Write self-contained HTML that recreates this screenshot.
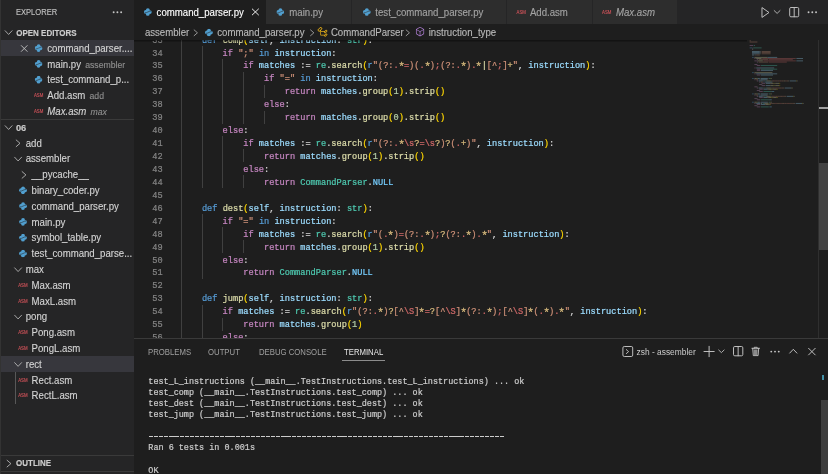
<!DOCTYPE html><html><head><meta charset="utf-8"><style>

*{margin:0;padding:0;box-sizing:border-box}
html,body{width:828px;height:474px;overflow:hidden;background:#1e1e1e}
body{position:relative;font-family:"Liberation Sans",sans-serif}
#wrap{position:absolute;left:0;top:0;width:828px;height:474px;will-change:transform}
.abs{position:absolute}
.sbh{position:absolute;font-size:8.2px;color:#c0c0c0;line-height:10px;white-space:nowrap;transform:scaleX(0.922);transform-origin:0 0;-webkit-text-stroke:0.12px currentColor}
.sech{position:absolute;font-size:8px;font-weight:bold;color:#cccccc;line-height:10px;white-space:nowrap;transform:scaleY(1.18);transform-origin:0 8.1px;-webkit-text-stroke:0.15px currentColor}
.row{position:absolute;font-size:9.65px;color:#d4d4d4;line-height:15.8px;white-space:nowrap;transform:scaleY(1.1);transform-origin:0 11.2px;-webkit-text-stroke:0.12px currentColor}
.row.it{font-style:italic}
.desc{font-size:8.7px;color:#8f8f8f;margin-left:4.2px}
.desc.it{font-style:italic}
.tabt{position:absolute;font-size:9.65px;color:#a3a3a3;line-height:24.4px;white-space:nowrap;transform:scaleY(1.1);transform-origin:0 15.5px;-webkit-text-stroke:0.12px currentColor}
.tabt.act{color:#ffffff}
.bct{position:absolute;font-size:9.65px;color:#bababa;line-height:15.2px;white-space:nowrap;transform:scaleY(1.1);transform-origin:0 10.9px;-webkit-text-stroke:0.12px currentColor}
#ed{position:absolute;left:0;top:0;width:828px;height:339px;overflow:hidden}
.ln{position:absolute;left:134px;width:28.6px;text-align:right;font-family:"Liberation Mono",monospace;font-size:8.63px;line-height:12.94px;color:#858585;-webkit-text-stroke:0.2px currentColor;transform:scaleY(1.12);transform-origin:0 9.2px}
.cl{position:absolute;left:181.2px;white-space:pre;font-family:"Liberation Mono",monospace;font-size:8.63px;line-height:12.94px;color:#d4d4d4;-webkit-text-stroke:0.22px currentColor}
.kw{color:#c586c0}.st{color:#569cd6}.fn{color:#dcdcaa}.var{color:#9cdcfe}.ty{color:#4ec9b0}.const{color:#75cdfe}
.ast{display:inline-block;transform:translateY(1.9px) scale(1.3)}
.s{color:#ce9178}.num{color:#b5cea8}.b1{color:#ffd700}.rx{color:#d16969}.rq{color:#d7ba7d}.rp{color:#ce9178}
.pt{position:absolute;font-size:8.5px;color:#a0a0a0;line-height:10px;white-space:nowrap;transform:scaleX(0.912);transform-origin:0 0}
.pt.act{color:#e7e7e7}
.term{position:absolute;white-space:pre;font-family:"Liberation Mono",monospace;font-size:8.48px;line-height:11.05px;color:#cccccc;-webkit-text-stroke:0.2px currentColor;transform:scaleY(1.12);transform-origin:0 7.8px}
#ov{position:absolute;left:0;top:0;width:828px;height:474px;overflow:visible}

</style></head><body><div id="wrap">
<div id="ed">
<div class="ln" style="top:34.56px">33</div>
<div class="cl" style="top:34.56px">    <span class="st">def</span> <span class="fn">comp</span><span class="b1">(</span><span class="var">self</span>, <span class="var">instruction</span>: <span class="ty">str</span><span class="b1">)</span>:</div>
<div class="ln" style="top:47.50px">34</div>
<div class="cl" style="top:47.50px">        <span class="kw">if</span> <span class="s">&quot;;&quot;</span> <span class="st">in</span> <span class="var">instruction</span>:</div>
<div class="ln" style="top:60.44px">35</div>
<div class="cl" style="top:60.44px">            <span class="kw">if</span> <span class="var">matches</span> := <span class="ty">re</span>.<span class="fn">search</span><span class="b1">(</span><span class="st">r</span><span class="s">&quot;</span><span class="rp">(?:</span><span class="rx">.</span><span class="rq ast">*</span><span class="rx">=</span><span class="rp">)</span><span class="rp">(</span><span class="rx">.</span><span class="rq ast">*</span><span class="rp">)</span><span class="rx">;</span><span class="rp">(?:</span><span class="rx">.</span><span class="rq ast">*</span><span class="rp">)</span><span class="rx">.</span><span class="rq ast">*</span><span class="fn">|</span><span class="rp">[</span><span class="rp">^</span><span class="rx">;</span><span class="rp">]</span><span class="rq">+</span><span class="s">&quot;</span>, <span class="var">instruction</span><span class="b1">)</span>:</div>
<div class="ln" style="top:73.38px">36</div>
<div class="cl" style="top:73.38px">                <span class="kw">if</span> <span class="s">&quot;=&quot;</span> <span class="st">in</span> <span class="var">instruction</span>:</div>
<div class="ln" style="top:86.32px">37</div>
<div class="cl" style="top:86.32px">                    <span class="kw">return</span> <span class="var">matches</span>.<span class="fn">group</span><span class="b1">(</span><span class="num">1</span><span class="b1">)</span>.<span class="fn">strip</span><span class="b1">(</span><span class="b1">)</span></div>
<div class="ln" style="top:99.26px">38</div>
<div class="cl" style="top:99.26px">                <span class="kw">else</span>:</div>
<div class="ln" style="top:112.20px">39</div>
<div class="cl" style="top:112.20px">                    <span class="kw">return</span> <span class="var">matches</span>.<span class="fn">group</span><span class="b1">(</span><span class="num">0</span><span class="b1">)</span>.<span class="fn">strip</span><span class="b1">(</span><span class="b1">)</span></div>
<div class="ln" style="top:125.14px">40</div>
<div class="cl" style="top:125.14px">        <span class="kw">else</span>:</div>
<div class="ln" style="top:138.08px">41</div>
<div class="cl" style="top:138.08px">            <span class="kw">if</span> <span class="var">matches</span> := <span class="ty">re</span>.<span class="fn">search</span><span class="b1">(</span><span class="st">r</span><span class="s">&quot;</span><span class="rp">(?:</span><span class="rx">.</span><span class="rq ast">*</span><span class="rx">\s</span><span class="rq">?</span><span class="rx">=</span><span class="rx">\s</span><span class="rq">?</span><span class="rp">)</span><span class="rq">?</span><span class="rp">(</span><span class="rx">.</span><span class="rq">+</span><span class="rp">)</span><span class="s">&quot;</span>, <span class="var">instruction</span><span class="b1">)</span>:</div>
<div class="ln" style="top:151.02px">42</div>
<div class="cl" style="top:151.02px">                <span class="kw">return</span> <span class="var">matches</span>.<span class="fn">group</span><span class="b1">(</span><span class="num">1</span><span class="b1">)</span>.<span class="fn">strip</span><span class="b1">(</span><span class="b1">)</span></div>
<div class="ln" style="top:163.96px">43</div>
<div class="cl" style="top:163.96px">            <span class="kw">else</span>:</div>
<div class="ln" style="top:176.90px">44</div>
<div class="cl" style="top:176.90px">                <span class="kw">return</span> <span class="ty">CommandParser</span>.<span class="const">NULL</span></div>
<div class="ln" style="top:189.84px">45</div>
<div class="cl" style="top:189.84px"></div>
<div class="ln" style="top:202.78px">46</div>
<div class="cl" style="top:202.78px">    <span class="st">def</span> <span class="fn">dest</span><span class="b1">(</span><span class="var">self</span>, <span class="var">instruction</span>: <span class="ty">str</span><span class="b1">)</span>:</div>
<div class="ln" style="top:215.72px">47</div>
<div class="cl" style="top:215.72px">        <span class="kw">if</span> <span class="s">&quot;=&quot;</span> <span class="st">in</span> <span class="var">instruction</span>:</div>
<div class="ln" style="top:228.66px">48</div>
<div class="cl" style="top:228.66px">            <span class="kw">if</span> <span class="var">matches</span> := <span class="ty">re</span>.<span class="fn">search</span><span class="b1">(</span><span class="st">r</span><span class="s">&quot;</span><span class="rp">(</span><span class="rx">.</span><span class="rq ast">*</span><span class="rp">)</span><span class="rx">=</span><span class="rp">(?:</span><span class="rx">.</span><span class="rq ast">*</span><span class="rp">)</span><span class="rx">;</span><span class="rq">?</span><span class="rp">(?:</span><span class="rx">.</span><span class="rq ast">*</span><span class="rp">)</span><span class="rx">.</span><span class="rq ast">*</span><span class="s">&quot;</span>, <span class="var">instruction</span><span class="b1">)</span>:</div>
<div class="ln" style="top:241.60px">49</div>
<div class="cl" style="top:241.60px">                <span class="kw">return</span> <span class="var">matches</span>.<span class="fn">group</span><span class="b1">(</span><span class="num">1</span><span class="b1">)</span>.<span class="fn">strip</span><span class="b1">(</span><span class="b1">)</span></div>
<div class="ln" style="top:254.54px">50</div>
<div class="cl" style="top:254.54px">        <span class="kw">else</span>:</div>
<div class="ln" style="top:267.48px">51</div>
<div class="cl" style="top:267.48px">            <span class="kw">return</span> <span class="ty">CommandParser</span>.<span class="const">NULL</span></div>
<div class="ln" style="top:280.42px">52</div>
<div class="cl" style="top:280.42px"></div>
<div class="ln" style="top:293.36px">53</div>
<div class="cl" style="top:293.36px">    <span class="st">def</span> <span class="fn">jump</span><span class="b1">(</span><span class="var">self</span>, <span class="var">instruction</span>: <span class="ty">str</span><span class="b1">)</span>:</div>
<div class="ln" style="top:306.30px">54</div>
<div class="cl" style="top:306.30px">        <span class="kw">if</span> <span class="var">matches</span> := <span class="ty">re</span>.<span class="fn">search</span><span class="b1">(</span><span class="st">r</span><span class="s">&quot;</span><span class="rp">(?:</span><span class="rx">.</span><span class="rq ast">*</span><span class="rp">)</span><span class="rq">?</span><span class="rp">[</span><span class="rp">^</span><span class="rx">\S</span><span class="rp">]</span><span class="rq ast">*</span><span class="rx">=</span><span class="rq">?</span><span class="rp">[</span><span class="rp">^</span><span class="rx">\S</span><span class="rp">]</span><span class="rq ast">*</span><span class="rp">(?:</span><span class="rx">.</span><span class="rq ast">*</span><span class="rp">)</span><span class="rx">;</span><span class="rp">[</span><span class="rp">^</span><span class="rx">\S</span><span class="rp">]</span><span class="rq ast">*</span><span class="rp">(</span><span class="rx">.</span><span class="rq ast">*</span><span class="rp">)</span><span class="rx">.</span><span class="rq ast">*</span><span class="s">&quot;</span>, <span class="var">instruction</span><span class="b1">)</span>:</div>
<div class="ln" style="top:319.24px">55</div>
<div class="cl" style="top:319.24px">            <span class="kw">return</span> <span class="var">matches</span>.<span class="fn">group</span><span class="b1">(</span><span class="num">1</span><span class="b1">)</span></div>
<div class="ln" style="top:332.18px">56</div>
<div class="cl" style="top:332.18px">        <span class="kw">else</span>:</div>
<div class="abs" style="left:180.80px;top:32.96px;width:0.90px;height:310.56px;background:#404040;"></div>
<div class="abs" style="left:201.51px;top:45.90px;width:0.90px;height:142.34px;background:#404040;"></div>
<div class="abs" style="left:201.51px;top:214.12px;width:0.90px;height:64.70px;background:#404040;"></div>
<div class="abs" style="left:201.51px;top:304.70px;width:0.90px;height:38.82px;background:#404040;"></div>
<div class="abs" style="left:222.22px;top:58.84px;width:0.90px;height:64.70px;background:#404040;"></div>
<div class="abs" style="left:222.22px;top:136.48px;width:0.90px;height:51.76px;background:#404040;"></div>
<div class="abs" style="left:222.22px;top:227.06px;width:0.90px;height:25.88px;background:#404040;"></div>
<div class="abs" style="left:222.22px;top:317.64px;width:0.90px;height:12.94px;background:#404040;"></div>
<div class="abs" style="left:242.94px;top:71.78px;width:0.90px;height:51.76px;background:#404040;"></div>
<div class="abs" style="left:242.94px;top:149.42px;width:0.90px;height:12.94px;background:#404040;"></div>
<div class="abs" style="left:242.94px;top:175.30px;width:0.90px;height:12.94px;background:#404040;"></div>
<div class="abs" style="left:242.94px;top:240.00px;width:0.90px;height:12.94px;background:#404040;"></div>
<div class="abs" style="left:263.65px;top:84.72px;width:0.90px;height:12.94px;background:#404040;"></div>
<div class="abs" style="left:263.65px;top:110.60px;width:0.90px;height:12.94px;background:#404040;"></div>
</div>
<div class="abs" style="left:818.20px;top:40.00px;width:0.90px;height:299.00px;background:#2f2f2f;"></div>
<div class="abs" style="left:818.80px;top:163.00px;width:9.20px;height:87.00px;background:#434343;"></div>
<div class="abs" style="left:819.00px;top:107.20px;width:9.00px;height:1.70px;background:#a0a0a0;"></div>
<div id="panel">
<div class="abs" style="left:134.00px;top:338.60px;width:694.00px;height:136.00px;background:#1e1e1e;"></div>
<div class="abs" style="left:134.00px;top:338.20px;width:694.00px;height:0.90px;background:#3a3a3a;"></div>
<div class="pt" style="left:147.80px;top:346.90px;">PROBLEMS</div>
<div class="pt" style="left:208.40px;top:346.90px;">OUTPUT</div>
<div class="pt" style="left:258.70px;top:346.90px;">DEBUG CONSOLE</div>
<div class="pt act" style="left:344.10px;top:346.90px;">TERMINAL</div>
<div class="abs" style="left:341.90px;top:359.90px;width:43.50px;height:1.30px;background:#8c8c8c;"></div>
<div class="term" style="left:148.30px;top:377.20px;">test_L_instructions (__main__.TestInstructions.test_L_instructions) ... ok</div>
<div class="term" style="left:148.30px;top:388.24px;">test_comp (__main__.TestInstructions.test_comp) ... ok</div>
<div class="term" style="left:148.30px;top:399.28px;">test_dest (__main__.TestInstructions.test_dest) ... ok</div>
<div class="term" style="left:148.30px;top:410.32px;">test_jump (__main__.TestInstructions.test_jump) ... ok</div>
<div class="term" style="left:148.30px;top:421.36px;"></div>
<div class="term" style="left:148.30px;top:432.40px;"></div>
<div class="term" style="left:148.30px;top:443.44px;">Ran 6 tests in 0.001s</div>
<div class="term" style="left:148.30px;top:454.48px;"></div>
<div class="term" style="left:148.30px;top:465.52px;">OK</div>
<div class="abs" style="left:148.50px;top:436.00px;width:356.30px;height:1.05px;background:transparent;background:repeating-linear-gradient(90deg,#cccccc 0,#cccccc 4.2px,transparent 4.2px,transparent 5.09px)"></div>
<div class="pt" style="left:636.60px;top:346.70px;font-size:8.4px;color:#cccccc;transform:none">zsh - assembler</div>
<div class="abs" style="left:821.60px;top:374.60px;width:2.50px;height:5.00px;background:#4391a8;"></div>
<div class="abs" style="left:821.30px;top:400.00px;width:6.70px;height:74.00px;background:#3e3e3e;"></div>
</div>
<div class="abs" style="left:134.00px;top:0.00px;width:694.00px;height:24.40px;background:#252526;"></div>
<div class="abs" style="left:134.00px;top:0.00px;width:131.80px;height:24.40px;background:#1e1e1e;"></div>
<div class="tabt act" style="left:156.60px;top:0.50px;">command_parser.py</div>
<div class="abs" style="left:265.80px;top:0.00px;width:86.20px;height:24.40px;background:#2d2d2d;"></div>
<div class="abs" style="left:351.20px;top:0.00px;width:0.80px;height:24.40px;background:#252526;"></div>
<div class="tabt" style="left:289.30px;top:0.50px;">main.py</div>
<div class="abs" style="left:352.00px;top:0.00px;width:154.70px;height:24.40px;background:#2d2d2d;"></div>
<div class="abs" style="left:505.90px;top:0.00px;width:0.80px;height:24.40px;background:#252526;"></div>
<div class="tabt" style="left:375.30px;top:0.50px;">test_command_parser.py</div>
<div class="abs" style="left:506.70px;top:0.00px;width:86.00px;height:24.40px;background:#2d2d2d;"></div>
<div class="abs" style="left:591.90px;top:0.00px;width:0.80px;height:24.40px;background:#252526;"></div>
<div class="tabt" style="left:529.90px;top:0.50px;">Add.asm</div>
<div class="abs" style="left:592.70px;top:0.00px;width:85.30px;height:24.40px;background:#2d2d2d;"></div>
<div class="abs" style="left:677.20px;top:0.00px;width:0.80px;height:24.40px;background:#252526;"></div>
<div class="tabt" style="left:616.00px;top:0.50px;font-style:italic;">Max.asm</div>
<div class="abs" style="left:134.00px;top:24.40px;width:694.00px;height:15.60px;background:#1e1e1e;"></div>
<div class="abs" style="left:134.00px;top:40.00px;width:613.40px;height:2.20px;background:transparent;background:linear-gradient(rgba(0,0,0,0.42),rgba(0,0,0,0.12))"></div>
<div class="bct" style="left:144.90px;top:25.00px;">assembler</div>
<div class="bct" style="left:217.30px;top:25.00px;">command_parser.py</div>
<div class="bct" style="left:330.90px;top:25.00px;">CommandParser</div>
<div class="bct" style="left:428.70px;top:25.00px;">instruction_type</div>
<div class="abs" style="left:0.00px;top:0.00px;width:134.00px;height:474.00px;background:#252526;"></div>
<div class="sbh" style="left:15.70px;top:7.70px;">EXPLORER</div>
<div class="sech" style="left:16.20px;top:28.70px;">OPEN EDITORS</div>
<div class="abs" style="left:1.30px;top:40.20px;width:132.70px;height:15.70px;background:#37373d;"></div>
<div class="row" style="left:47.30px;top:40.80px;">command_parser....</div>
<div class="row" style="left:47.30px;top:56.60px;">main.py<span class="desc">assembler</span></div>
<div class="row" style="left:47.30px;top:72.40px;">test_command_p...</div>
<div class="row" style="left:47.30px;top:88.20px;">Add.asm<span class="desc">add</span></div>
<div class="row it" style="left:47.30px;top:104.00px;">Max.asm<span class="desc it">max</span></div>
<div class="abs" style="left:1.30px;top:118.70px;width:132.70px;height:1.00px;background:#3a3a3a;"></div>
<div class="sech" style="left:15.90px;top:123.10px;font-size:8.4px;transform:scaleY(1.1) scaleX(1.1)">06</div>
<div class="row" style="left:25.70px;top:135.60px;">add</div>
<div class="row" style="left:25.70px;top:151.40px;">assembler</div>
<div class="row" style="left:31.60px;top:167.20px;">__pycache__</div>
<div class="row" style="left:31.60px;top:183.00px;">binary_coder.py</div>
<div class="row" style="left:31.60px;top:198.80px;">command_parser.py</div>
<div class="row" style="left:31.60px;top:214.60px;">main.py</div>
<div class="row" style="left:31.60px;top:230.40px;">symbol_table.py</div>
<div class="row" style="left:31.60px;top:246.20px;">test_command_parse...</div>
<div class="row" style="left:25.70px;top:262.00px;">max</div>
<div class="row" style="left:31.60px;top:277.80px;">Max.asm</div>
<div class="row" style="left:31.60px;top:293.60px;">MaxL.asm</div>
<div class="row" style="left:25.70px;top:309.40px;">pong</div>
<div class="row" style="left:31.60px;top:325.20px;">Pong.asm</div>
<div class="row" style="left:31.60px;top:341.00px;">PongL.asm</div>
<div class="abs" style="left:1.30px;top:356.20px;width:132.70px;height:15.70px;background:#37373d;"></div>
<div class="row" style="left:25.70px;top:356.80px;">rect</div>
<div class="row" style="left:31.60px;top:372.60px;">Rect.asm</div>
<div class="row" style="left:31.60px;top:388.40px;">RectL.asm</div>
<div class="abs" style="left:15.40px;top:372.00px;width:1.00px;height:31.80px;background:#585858;"></div>
<div class="abs" style="left:1.30px;top:455.30px;width:132.70px;height:1.00px;background:#3a3a3a;"></div>
<div class="sech" style="left:16.00px;top:459.40px;">OUTLINE</div>
<div class="abs" style="left:1.30px;top:471.40px;width:132.70px;height:1.00px;background:#3a3a3a;"></div>
<div class="abs" style="left:0.00px;top:0.00px;width:1.30px;height:474.00px;background:#333333;"></div>
<svg id="ov" viewBox="0 0 828 474"><defs><mask id="pym" maskUnits="userSpaceOnUse" x="0" y="0" width="16" height="16"><rect width="16" height="16" fill="#fff"/><path d="M2.2 9.6C4.5 9.6 6 9 8 8C10 7 11.5 6.4 13.8 6.4" fill="none" stroke="#000" stroke-width="1.1"/></mask></defs><g opacity="0.38"><rect x="749.60" y="40.40" width="1.20" height="0.85" fill="#ce9178"/><rect x="749.60" y="41.58" width="7.80" height="0.85" fill="#ce9178"/><rect x="749.60" y="45.12" width="3.60" height="0.85" fill="#c586c0"/><rect x="753.80" y="45.12" width="1.20" height="0.85" fill="#4ec9b0"/><rect x="749.60" y="47.48" width="3.00" height="0.85" fill="#569cd6"/><rect x="753.20" y="47.48" width="8.40" height="0.85" fill="#4ec9b0"/><rect x="752.00" y="48.66" width="1.20" height="0.85" fill="#d4d4d4"/><rect x="752.00" y="51.02" width="7.80" height="0.85" fill="#9cdcfe"/><rect x="760.40" y="51.02" width="0.60" height="0.85" fill="#d4d4d4"/><rect x="761.60" y="51.02" width="9.00" height="0.85" fill="#ce9178"/><rect x="752.00" y="52.20" width="7.80" height="0.85" fill="#9cdcfe"/><rect x="760.40" y="52.20" width="0.60" height="0.85" fill="#d4d4d4"/><rect x="761.60" y="52.20" width="9.00" height="0.85" fill="#ce9178"/><rect x="752.00" y="53.38" width="7.80" height="0.85" fill="#9cdcfe"/><rect x="760.40" y="53.38" width="0.60" height="0.85" fill="#d4d4d4"/><rect x="761.60" y="53.38" width="9.00" height="0.85" fill="#ce9178"/><rect x="752.00" y="54.56" width="2.40" height="0.85" fill="#9cdcfe"/><rect x="755.00" y="54.56" width="0.60" height="0.85" fill="#d4d4d4"/><rect x="756.20" y="54.56" width="3.60" height="0.85" fill="#ce9178"/><rect x="752.00" y="56.92" width="1.80" height="0.85" fill="#569cd6"/><rect x="754.40" y="56.92" width="13.20" height="0.85" fill="#dcdcaa"/><rect x="767.60" y="56.92" width="9.60" height="0.85" fill="#9cdcfe"/><rect x="754.40" y="58.10" width="1.20" height="0.85" fill="#c586c0"/><rect x="756.20" y="58.10" width="5.40" height="0.85" fill="#dcdcaa"/><rect x="762.20" y="58.10" width="33.60" height="0.85" fill="#d16969"/><rect x="796.40" y="58.10" width="6.60" height="0.85" fill="#9cdcfe"/><rect x="756.80" y="59.28" width="1.20" height="0.85" fill="#c586c0"/><rect x="758.60" y="59.28" width="9.60" height="0.85" fill="#ce9178"/><rect x="768.80" y="59.28" width="24.00" height="0.85" fill="#d16969"/><rect x="754.40" y="60.46" width="2.40" height="0.85" fill="#c586c0"/><rect x="757.40" y="60.46" width="5.40" height="0.85" fill="#dcdcaa"/><rect x="763.40" y="60.46" width="32.40" height="0.85" fill="#d16969"/><rect x="796.40" y="60.46" width="6.60" height="0.85" fill="#9cdcfe"/><rect x="756.80" y="61.64" width="1.20" height="0.85" fill="#c586c0"/><rect x="758.60" y="61.64" width="9.60" height="0.85" fill="#ce9178"/><rect x="768.80" y="61.64" width="18.00" height="0.85" fill="#d16969"/><rect x="754.40" y="64.00" width="3.00" height="0.85" fill="#c586c0"/><rect x="756.80" y="65.18" width="3.60" height="0.85" fill="#c586c0"/><rect x="761.00" y="65.18" width="16.20" height="0.85" fill="#4ec9b0"/><rect x="754.40" y="67.54" width="1.20" height="0.85" fill="#c586c0"/><rect x="756.20" y="67.54" width="18.00" height="0.85" fill="#9cdcfe"/><rect x="756.80" y="68.72" width="3.60" height="0.85" fill="#c586c0"/><rect x="761.00" y="68.72" width="16.20" height="0.85" fill="#4ec9b0"/><rect x="756.80" y="69.90" width="3.60" height="0.85" fill="#c586c0"/><rect x="761.00" y="69.90" width="12.00" height="0.85" fill="#9cdcfe"/><rect x="752.00" y="72.26" width="1.80" height="0.85" fill="#569cd6"/><rect x="754.40" y="72.26" width="18.00" height="0.85" fill="#dcdcaa"/><rect x="754.40" y="73.44" width="1.20" height="0.85" fill="#c586c0"/><rect x="756.20" y="73.44" width="21.00" height="0.85" fill="#9cdcfe"/><rect x="756.80" y="74.62" width="3.60" height="0.85" fill="#c586c0"/><rect x="761.00" y="74.62" width="12.00" height="0.85" fill="#9cdcfe"/><rect x="752.00" y="78.16" width="1.80" height="0.85" fill="#569cd6"/><rect x="754.40" y="78.16" width="2.40" height="0.85" fill="#dcdcaa"/><rect x="756.80" y="78.16" width="0.60" height="0.85" fill="#ffd700"/><rect x="757.40" y="78.16" width="2.40" height="0.85" fill="#9cdcfe"/><rect x="759.80" y="78.16" width="0.60" height="0.85" fill="#d4d4d4"/><rect x="761.00" y="78.16" width="6.60" height="0.85" fill="#9cdcfe"/><rect x="767.60" y="78.16" width="0.60" height="0.85" fill="#d4d4d4"/><rect x="768.80" y="78.16" width="1.80" height="0.85" fill="#4ec9b0"/><rect x="770.60" y="78.16" width="0.60" height="0.85" fill="#ffd700"/><rect x="771.20" y="78.16" width="0.60" height="0.85" fill="#d4d4d4"/><rect x="754.40" y="79.34" width="1.20" height="0.85" fill="#c586c0"/><rect x="756.20" y="79.34" width="1.80" height="0.85" fill="#ce9178"/><rect x="758.60" y="79.34" width="1.20" height="0.85" fill="#569cd6"/><rect x="760.40" y="79.34" width="6.60" height="0.85" fill="#9cdcfe"/><rect x="767.00" y="79.34" width="0.60" height="0.85" fill="#d4d4d4"/><rect x="756.80" y="80.52" width="1.20" height="0.85" fill="#c586c0"/><rect x="758.60" y="80.52" width="4.20" height="0.85" fill="#9cdcfe"/><rect x="763.40" y="80.52" width="1.20" height="0.85" fill="#d4d4d4"/><rect x="765.20" y="80.52" width="1.20" height="0.85" fill="#4ec9b0"/><rect x="766.40" y="80.52" width="0.60" height="0.85" fill="#d4d4d4"/><rect x="767.00" y="80.52" width="3.60" height="0.85" fill="#dcdcaa"/><rect x="770.60" y="80.52" width="0.60" height="0.85" fill="#ffd700"/><rect x="771.20" y="80.52" width="0.60" height="0.85" fill="#569cd6"/><rect x="771.80" y="80.52" width="0.60" height="0.85" fill="#ce9178"/><rect x="772.40" y="80.52" width="1.80" height="0.85" fill="#ce9178"/><rect x="774.20" y="80.52" width="0.60" height="0.85" fill="#d16969"/><rect x="774.80" y="80.52" width="0.60" height="0.85" fill="#d7ba7d"/><rect x="775.40" y="80.52" width="0.60" height="0.85" fill="#d16969"/><rect x="776.00" y="80.52" width="0.60" height="0.85" fill="#ce9178"/><rect x="776.60" y="80.52" width="0.60" height="0.85" fill="#ce9178"/><rect x="777.20" y="80.52" width="0.60" height="0.85" fill="#d16969"/><rect x="777.80" y="80.52" width="0.60" height="0.85" fill="#d7ba7d"/><rect x="778.40" y="80.52" width="0.60" height="0.85" fill="#ce9178"/><rect x="779.00" y="80.52" width="0.60" height="0.85" fill="#d16969"/><rect x="779.60" y="80.52" width="1.80" height="0.85" fill="#ce9178"/><rect x="781.40" y="80.52" width="0.60" height="0.85" fill="#d16969"/><rect x="782.00" y="80.52" width="0.60" height="0.85" fill="#d7ba7d"/><rect x="782.60" y="80.52" width="0.60" height="0.85" fill="#ce9178"/><rect x="783.20" y="80.52" width="0.60" height="0.85" fill="#d16969"/><rect x="783.80" y="80.52" width="0.60" height="0.85" fill="#d7ba7d"/><rect x="784.40" y="80.52" width="0.60" height="0.85" fill="#dcdcaa"/><rect x="785.00" y="80.52" width="0.60" height="0.85" fill="#ce9178"/><rect x="785.60" y="80.52" width="0.60" height="0.85" fill="#ce9178"/><rect x="786.20" y="80.52" width="0.60" height="0.85" fill="#d16969"/><rect x="786.80" y="80.52" width="0.60" height="0.85" fill="#ce9178"/><rect x="787.40" y="80.52" width="0.60" height="0.85" fill="#d7ba7d"/><rect x="788.00" y="80.52" width="0.60" height="0.85" fill="#ce9178"/><rect x="788.60" y="80.52" width="0.60" height="0.85" fill="#d4d4d4"/><rect x="789.80" y="80.52" width="6.60" height="0.85" fill="#9cdcfe"/><rect x="796.40" y="80.52" width="0.60" height="0.85" fill="#ffd700"/><rect x="797.00" y="80.52" width="0.60" height="0.85" fill="#d4d4d4"/><rect x="759.20" y="81.70" width="1.20" height="0.85" fill="#c586c0"/><rect x="761.00" y="81.70" width="1.80" height="0.85" fill="#ce9178"/><rect x="763.40" y="81.70" width="1.20" height="0.85" fill="#569cd6"/><rect x="765.20" y="81.70" width="6.60" height="0.85" fill="#9cdcfe"/><rect x="771.80" y="81.70" width="0.60" height="0.85" fill="#d4d4d4"/><rect x="761.60" y="82.88" width="3.60" height="0.85" fill="#c586c0"/><rect x="765.80" y="82.88" width="4.20" height="0.85" fill="#9cdcfe"/><rect x="770.00" y="82.88" width="0.60" height="0.85" fill="#d4d4d4"/><rect x="770.60" y="82.88" width="3.00" height="0.85" fill="#dcdcaa"/><rect x="773.60" y="82.88" width="0.60" height="0.85" fill="#ffd700"/><rect x="774.20" y="82.88" width="0.60" height="0.85" fill="#b5cea8"/><rect x="774.80" y="82.88" width="0.60" height="0.85" fill="#ffd700"/><rect x="775.40" y="82.88" width="0.60" height="0.85" fill="#d4d4d4"/><rect x="776.00" y="82.88" width="3.00" height="0.85" fill="#dcdcaa"/><rect x="779.00" y="82.88" width="0.60" height="0.85" fill="#ffd700"/><rect x="779.60" y="82.88" width="0.60" height="0.85" fill="#ffd700"/><rect x="759.20" y="84.06" width="2.40" height="0.85" fill="#c586c0"/><rect x="761.60" y="84.06" width="0.60" height="0.85" fill="#d4d4d4"/><rect x="761.60" y="85.24" width="3.60" height="0.85" fill="#c586c0"/><rect x="765.80" y="85.24" width="4.20" height="0.85" fill="#9cdcfe"/><rect x="770.00" y="85.24" width="0.60" height="0.85" fill="#d4d4d4"/><rect x="770.60" y="85.24" width="3.00" height="0.85" fill="#dcdcaa"/><rect x="773.60" y="85.24" width="0.60" height="0.85" fill="#ffd700"/><rect x="774.20" y="85.24" width="0.60" height="0.85" fill="#b5cea8"/><rect x="774.80" y="85.24" width="0.60" height="0.85" fill="#ffd700"/><rect x="775.40" y="85.24" width="0.60" height="0.85" fill="#d4d4d4"/><rect x="776.00" y="85.24" width="3.00" height="0.85" fill="#dcdcaa"/><rect x="779.00" y="85.24" width="0.60" height="0.85" fill="#ffd700"/><rect x="779.60" y="85.24" width="0.60" height="0.85" fill="#ffd700"/><rect x="754.40" y="86.42" width="2.40" height="0.85" fill="#c586c0"/><rect x="756.80" y="86.42" width="0.60" height="0.85" fill="#d4d4d4"/><rect x="756.80" y="87.60" width="1.20" height="0.85" fill="#c586c0"/><rect x="758.60" y="87.60" width="4.20" height="0.85" fill="#9cdcfe"/><rect x="763.40" y="87.60" width="1.20" height="0.85" fill="#d4d4d4"/><rect x="765.20" y="87.60" width="1.20" height="0.85" fill="#4ec9b0"/><rect x="766.40" y="87.60" width="0.60" height="0.85" fill="#d4d4d4"/><rect x="767.00" y="87.60" width="3.60" height="0.85" fill="#dcdcaa"/><rect x="770.60" y="87.60" width="0.60" height="0.85" fill="#ffd700"/><rect x="771.20" y="87.60" width="0.60" height="0.85" fill="#569cd6"/><rect x="771.80" y="87.60" width="0.60" height="0.85" fill="#ce9178"/><rect x="772.40" y="87.60" width="1.80" height="0.85" fill="#ce9178"/><rect x="774.20" y="87.60" width="0.60" height="0.85" fill="#d16969"/><rect x="774.80" y="87.60" width="0.60" height="0.85" fill="#d7ba7d"/><rect x="775.40" y="87.60" width="1.20" height="0.85" fill="#d16969"/><rect x="776.60" y="87.60" width="0.60" height="0.85" fill="#d7ba7d"/><rect x="777.20" y="87.60" width="0.60" height="0.85" fill="#d16969"/><rect x="777.80" y="87.60" width="1.20" height="0.85" fill="#d16969"/><rect x="779.00" y="87.60" width="0.60" height="0.85" fill="#d7ba7d"/><rect x="779.60" y="87.60" width="0.60" height="0.85" fill="#ce9178"/><rect x="780.20" y="87.60" width="0.60" height="0.85" fill="#d7ba7d"/><rect x="780.80" y="87.60" width="0.60" height="0.85" fill="#ce9178"/><rect x="781.40" y="87.60" width="0.60" height="0.85" fill="#d16969"/><rect x="782.00" y="87.60" width="0.60" height="0.85" fill="#d7ba7d"/><rect x="782.60" y="87.60" width="0.60" height="0.85" fill="#ce9178"/><rect x="783.20" y="87.60" width="0.60" height="0.85" fill="#ce9178"/><rect x="783.80" y="87.60" width="0.60" height="0.85" fill="#d4d4d4"/><rect x="785.00" y="87.60" width="6.60" height="0.85" fill="#9cdcfe"/><rect x="791.60" y="87.60" width="0.60" height="0.85" fill="#ffd700"/><rect x="792.20" y="87.60" width="0.60" height="0.85" fill="#d4d4d4"/><rect x="759.20" y="88.78" width="3.60" height="0.85" fill="#c586c0"/><rect x="763.40" y="88.78" width="4.20" height="0.85" fill="#9cdcfe"/><rect x="767.60" y="88.78" width="0.60" height="0.85" fill="#d4d4d4"/><rect x="768.20" y="88.78" width="3.00" height="0.85" fill="#dcdcaa"/><rect x="771.20" y="88.78" width="0.60" height="0.85" fill="#ffd700"/><rect x="771.80" y="88.78" width="0.60" height="0.85" fill="#b5cea8"/><rect x="772.40" y="88.78" width="0.60" height="0.85" fill="#ffd700"/><rect x="773.00" y="88.78" width="0.60" height="0.85" fill="#d4d4d4"/><rect x="773.60" y="88.78" width="3.00" height="0.85" fill="#dcdcaa"/><rect x="776.60" y="88.78" width="0.60" height="0.85" fill="#ffd700"/><rect x="777.20" y="88.78" width="0.60" height="0.85" fill="#ffd700"/><rect x="756.80" y="89.96" width="2.40" height="0.85" fill="#c586c0"/><rect x="759.20" y="89.96" width="0.60" height="0.85" fill="#d4d4d4"/><rect x="759.20" y="91.14" width="3.60" height="0.85" fill="#c586c0"/><rect x="763.40" y="91.14" width="7.80" height="0.85" fill="#4ec9b0"/><rect x="771.20" y="91.14" width="0.60" height="0.85" fill="#d4d4d4"/><rect x="771.80" y="91.14" width="2.40" height="0.85" fill="#75cdfe"/><rect x="752.00" y="93.50" width="1.80" height="0.85" fill="#569cd6"/><rect x="754.40" y="93.50" width="2.40" height="0.85" fill="#dcdcaa"/><rect x="756.80" y="93.50" width="0.60" height="0.85" fill="#ffd700"/><rect x="757.40" y="93.50" width="2.40" height="0.85" fill="#9cdcfe"/><rect x="759.80" y="93.50" width="0.60" height="0.85" fill="#d4d4d4"/><rect x="761.00" y="93.50" width="6.60" height="0.85" fill="#9cdcfe"/><rect x="767.60" y="93.50" width="0.60" height="0.85" fill="#d4d4d4"/><rect x="768.80" y="93.50" width="1.80" height="0.85" fill="#4ec9b0"/><rect x="770.60" y="93.50" width="0.60" height="0.85" fill="#ffd700"/><rect x="771.20" y="93.50" width="0.60" height="0.85" fill="#d4d4d4"/><rect x="754.40" y="94.68" width="1.20" height="0.85" fill="#c586c0"/><rect x="756.20" y="94.68" width="1.80" height="0.85" fill="#ce9178"/><rect x="758.60" y="94.68" width="1.20" height="0.85" fill="#569cd6"/><rect x="760.40" y="94.68" width="6.60" height="0.85" fill="#9cdcfe"/><rect x="767.00" y="94.68" width="0.60" height="0.85" fill="#d4d4d4"/><rect x="756.80" y="95.86" width="1.20" height="0.85" fill="#c586c0"/><rect x="758.60" y="95.86" width="4.20" height="0.85" fill="#9cdcfe"/><rect x="763.40" y="95.86" width="1.20" height="0.85" fill="#d4d4d4"/><rect x="765.20" y="95.86" width="1.20" height="0.85" fill="#4ec9b0"/><rect x="766.40" y="95.86" width="0.60" height="0.85" fill="#d4d4d4"/><rect x="767.00" y="95.86" width="3.60" height="0.85" fill="#dcdcaa"/><rect x="770.60" y="95.86" width="0.60" height="0.85" fill="#ffd700"/><rect x="771.20" y="95.86" width="0.60" height="0.85" fill="#569cd6"/><rect x="771.80" y="95.86" width="0.60" height="0.85" fill="#ce9178"/><rect x="772.40" y="95.86" width="0.60" height="0.85" fill="#ce9178"/><rect x="773.00" y="95.86" width="0.60" height="0.85" fill="#d16969"/><rect x="773.60" y="95.86" width="0.60" height="0.85" fill="#d7ba7d"/><rect x="774.20" y="95.86" width="0.60" height="0.85" fill="#ce9178"/><rect x="774.80" y="95.86" width="0.60" height="0.85" fill="#d16969"/><rect x="775.40" y="95.86" width="1.80" height="0.85" fill="#ce9178"/><rect x="777.20" y="95.86" width="0.60" height="0.85" fill="#d16969"/><rect x="777.80" y="95.86" width="0.60" height="0.85" fill="#d7ba7d"/><rect x="778.40" y="95.86" width="0.60" height="0.85" fill="#ce9178"/><rect x="779.00" y="95.86" width="0.60" height="0.85" fill="#d16969"/><rect x="779.60" y="95.86" width="0.60" height="0.85" fill="#d7ba7d"/><rect x="780.20" y="95.86" width="1.80" height="0.85" fill="#ce9178"/><rect x="782.00" y="95.86" width="0.60" height="0.85" fill="#d16969"/><rect x="782.60" y="95.86" width="0.60" height="0.85" fill="#d7ba7d"/><rect x="783.20" y="95.86" width="0.60" height="0.85" fill="#ce9178"/><rect x="783.80" y="95.86" width="0.60" height="0.85" fill="#d16969"/><rect x="784.40" y="95.86" width="0.60" height="0.85" fill="#d7ba7d"/><rect x="785.00" y="95.86" width="0.60" height="0.85" fill="#ce9178"/><rect x="785.60" y="95.86" width="0.60" height="0.85" fill="#d4d4d4"/><rect x="786.80" y="95.86" width="6.60" height="0.85" fill="#9cdcfe"/><rect x="793.40" y="95.86" width="0.60" height="0.85" fill="#ffd700"/><rect x="794.00" y="95.86" width="0.60" height="0.85" fill="#d4d4d4"/><rect x="759.20" y="97.04" width="3.60" height="0.85" fill="#c586c0"/><rect x="763.40" y="97.04" width="4.20" height="0.85" fill="#9cdcfe"/><rect x="767.60" y="97.04" width="0.60" height="0.85" fill="#d4d4d4"/><rect x="768.20" y="97.04" width="3.00" height="0.85" fill="#dcdcaa"/><rect x="771.20" y="97.04" width="0.60" height="0.85" fill="#ffd700"/><rect x="771.80" y="97.04" width="0.60" height="0.85" fill="#b5cea8"/><rect x="772.40" y="97.04" width="0.60" height="0.85" fill="#ffd700"/><rect x="773.00" y="97.04" width="0.60" height="0.85" fill="#d4d4d4"/><rect x="773.60" y="97.04" width="3.00" height="0.85" fill="#dcdcaa"/><rect x="776.60" y="97.04" width="0.60" height="0.85" fill="#ffd700"/><rect x="777.20" y="97.04" width="0.60" height="0.85" fill="#ffd700"/><rect x="754.40" y="98.22" width="2.40" height="0.85" fill="#c586c0"/><rect x="756.80" y="98.22" width="0.60" height="0.85" fill="#d4d4d4"/><rect x="756.80" y="99.40" width="3.60" height="0.85" fill="#c586c0"/><rect x="761.00" y="99.40" width="7.80" height="0.85" fill="#4ec9b0"/><rect x="768.80" y="99.40" width="0.60" height="0.85" fill="#d4d4d4"/><rect x="769.40" y="99.40" width="2.40" height="0.85" fill="#75cdfe"/><rect x="752.00" y="101.76" width="1.80" height="0.85" fill="#569cd6"/><rect x="754.40" y="101.76" width="2.40" height="0.85" fill="#dcdcaa"/><rect x="756.80" y="101.76" width="0.60" height="0.85" fill="#ffd700"/><rect x="757.40" y="101.76" width="2.40" height="0.85" fill="#9cdcfe"/><rect x="759.80" y="101.76" width="0.60" height="0.85" fill="#d4d4d4"/><rect x="761.00" y="101.76" width="6.60" height="0.85" fill="#9cdcfe"/><rect x="767.60" y="101.76" width="0.60" height="0.85" fill="#d4d4d4"/><rect x="768.80" y="101.76" width="1.80" height="0.85" fill="#4ec9b0"/><rect x="770.60" y="101.76" width="0.60" height="0.85" fill="#ffd700"/><rect x="771.20" y="101.76" width="0.60" height="0.85" fill="#d4d4d4"/><rect x="754.40" y="102.94" width="1.20" height="0.85" fill="#c586c0"/><rect x="756.20" y="102.94" width="4.20" height="0.85" fill="#9cdcfe"/><rect x="761.00" y="102.94" width="1.20" height="0.85" fill="#d4d4d4"/><rect x="762.80" y="102.94" width="1.20" height="0.85" fill="#4ec9b0"/><rect x="764.00" y="102.94" width="0.60" height="0.85" fill="#d4d4d4"/><rect x="764.60" y="102.94" width="3.60" height="0.85" fill="#dcdcaa"/><rect x="768.20" y="102.94" width="0.60" height="0.85" fill="#ffd700"/><rect x="768.80" y="102.94" width="0.60" height="0.85" fill="#569cd6"/><rect x="769.40" y="102.94" width="0.60" height="0.85" fill="#ce9178"/><rect x="770.00" y="102.94" width="1.80" height="0.85" fill="#ce9178"/><rect x="771.80" y="102.94" width="0.60" height="0.85" fill="#d16969"/><rect x="772.40" y="102.94" width="0.60" height="0.85" fill="#d7ba7d"/><rect x="773.00" y="102.94" width="0.60" height="0.85" fill="#ce9178"/><rect x="773.60" y="102.94" width="0.60" height="0.85" fill="#d7ba7d"/><rect x="774.20" y="102.94" width="0.60" height="0.85" fill="#ce9178"/><rect x="774.80" y="102.94" width="0.60" height="0.85" fill="#ce9178"/><rect x="775.40" y="102.94" width="1.20" height="0.85" fill="#d16969"/><rect x="776.60" y="102.94" width="0.60" height="0.85" fill="#ce9178"/><rect x="777.20" y="102.94" width="0.60" height="0.85" fill="#d7ba7d"/><rect x="777.80" y="102.94" width="0.60" height="0.85" fill="#d16969"/><rect x="778.40" y="102.94" width="0.60" height="0.85" fill="#d7ba7d"/><rect x="779.00" y="102.94" width="0.60" height="0.85" fill="#ce9178"/><rect x="779.60" y="102.94" width="0.60" height="0.85" fill="#ce9178"/><rect x="780.20" y="102.94" width="1.20" height="0.85" fill="#d16969"/><rect x="781.40" y="102.94" width="0.60" height="0.85" fill="#ce9178"/><rect x="782.00" y="102.94" width="0.60" height="0.85" fill="#d7ba7d"/><rect x="782.60" y="102.94" width="1.80" height="0.85" fill="#ce9178"/><rect x="784.40" y="102.94" width="0.60" height="0.85" fill="#d16969"/><rect x="785.00" y="102.94" width="0.60" height="0.85" fill="#d7ba7d"/><rect x="785.60" y="102.94" width="0.60" height="0.85" fill="#ce9178"/><rect x="786.20" y="102.94" width="0.60" height="0.85" fill="#d16969"/><rect x="786.80" y="102.94" width="0.60" height="0.85" fill="#ce9178"/><rect x="787.40" y="102.94" width="0.60" height="0.85" fill="#ce9178"/><rect x="788.00" y="102.94" width="1.20" height="0.85" fill="#d16969"/><rect x="789.20" y="102.94" width="0.60" height="0.85" fill="#ce9178"/><rect x="789.80" y="102.94" width="0.60" height="0.85" fill="#d7ba7d"/><rect x="790.40" y="102.94" width="0.60" height="0.85" fill="#ce9178"/><rect x="791.00" y="102.94" width="0.60" height="0.85" fill="#d16969"/><rect x="791.60" y="102.94" width="0.60" height="0.85" fill="#d7ba7d"/><rect x="792.20" y="102.94" width="0.60" height="0.85" fill="#ce9178"/><rect x="792.80" y="102.94" width="0.60" height="0.85" fill="#d16969"/><rect x="793.40" y="102.94" width="0.60" height="0.85" fill="#d7ba7d"/><rect x="794.00" y="102.94" width="0.60" height="0.85" fill="#ce9178"/><rect x="794.60" y="102.94" width="0.60" height="0.85" fill="#d4d4d4"/><rect x="795.80" y="102.94" width="6.60" height="0.85" fill="#9cdcfe"/><rect x="802.40" y="102.94" width="0.60" height="0.85" fill="#ffd700"/><rect x="803.00" y="102.94" width="0.60" height="0.85" fill="#d4d4d4"/><rect x="756.80" y="104.12" width="3.60" height="0.85" fill="#c586c0"/><rect x="761.00" y="104.12" width="4.20" height="0.85" fill="#9cdcfe"/><rect x="765.20" y="104.12" width="0.60" height="0.85" fill="#d4d4d4"/><rect x="765.80" y="104.12" width="3.00" height="0.85" fill="#dcdcaa"/><rect x="768.80" y="104.12" width="0.60" height="0.85" fill="#ffd700"/><rect x="769.40" y="104.12" width="0.60" height="0.85" fill="#b5cea8"/><rect x="770.00" y="104.12" width="0.60" height="0.85" fill="#ffd700"/><rect x="754.40" y="105.30" width="2.40" height="0.85" fill="#c586c0"/><rect x="756.80" y="105.30" width="0.60" height="0.85" fill="#d4d4d4"/><rect x="756.80" y="106.48" width="3.60" height="0.85" fill="#c586c0"/><rect x="761.00" y="106.48" width="7.80" height="0.85" fill="#4ec9b0"/><rect x="769.40" y="106.48" width="2.40" height="0.85" fill="#75cdfe"/></g>
<rect x="622.9" y="346.5" width="9.8" height="10" rx="1.4" fill="none" stroke="#c5c5c5" stroke-width="0.95"/>
<path d="M626.3 349.6L628.6 351.6L626.3 353.6" fill="none" stroke="#c5c5c5" stroke-width="0.90" stroke-linecap="round" stroke-linejoin="round"/>
<path d="M709.1 346.3V356.7M704 351.5H714.2" fill="none" stroke="#c5c5c5" stroke-width="0.95" stroke-linecap="round" stroke-linejoin="round"/>
<path d="M718.70 350.00L721.40 352.60L724.10 350.00" fill="none" stroke="#c5c5c5" stroke-width="0.85" stroke-linecap="round" stroke-linejoin="round"/>
<rect x="733.5" y="346.5" width="9.3" height="9.3" rx="1.3" fill="none" stroke="#c5c5c5" stroke-width="0.95"/>
<path d="M738.15 346.5V355.8" fill="none" stroke="#c5c5c5" stroke-width="0.95" stroke-linecap="round" stroke-linejoin="round"/>
<path d="M751.9 348.3H759.5M754.2 348.3V347.3H757.2V348.3M752.7 348.3L753.3 355.6H758.1L758.7 348.3" fill="none" stroke="#c5c5c5" stroke-width="0.90" stroke-linecap="round" stroke-linejoin="round"/>
<rect x="753.6" y="349.5" width="3.9" height="5.5" fill="#8a8a8a"/>
<circle cx="771.25" cy="351.60" r="0.95" fill="#c5c5c5"/>
<circle cx="775.00" cy="351.60" r="0.95" fill="#c5c5c5"/>
<circle cx="778.75" cy="351.60" r="0.95" fill="#c5c5c5"/>
<path d="M789.70 353.10L793.30 349.30L796.90 353.10" fill="none" stroke="#c5c5c5" stroke-width="0.95" stroke-linecap="round" stroke-linejoin="round"/>
<path d="M808.60 348.30L815.20 354.90M815.20 348.30L808.60 354.90" fill="none" stroke="#c5c5c5" stroke-width="0.95" stroke-linecap="round" stroke-linejoin="round"/>
<g transform="translate(143.60 7.80) scale(0.5250)"><g fill="#519fcf" mask="url(#pym)"><circle cx="8.1" cy="4.3" r="3.6"/><circle cx="11.8" cy="8.2" r="3.6"/><circle cx="7.9" cy="11.7" r="3.6"/><circle cx="4.2" cy="7.8" r="3.6"/><rect x="5" y="5" width="6" height="6"/></g></g>
<path d="M252.30 9.00L258.50 14.90M258.50 9.00L252.30 14.90" fill="none" stroke="#ffffff" stroke-width="0.90" stroke-linecap="round" stroke-linejoin="round"/>
<g transform="translate(276.15 7.80) scale(0.5250)"><g fill="#519fcf" mask="url(#pym)"><circle cx="8.1" cy="4.3" r="3.6"/><circle cx="11.8" cy="8.2" r="3.6"/><circle cx="7.9" cy="11.7" r="3.6"/><circle cx="4.2" cy="7.8" r="3.6"/><rect x="5" y="5" width="6" height="6"/></g></g>
<g transform="translate(362.60 7.80) scale(0.5250)"><g fill="#519fcf" mask="url(#pym)"><circle cx="8.1" cy="4.3" r="3.6"/><circle cx="11.8" cy="8.2" r="3.6"/><circle cx="7.9" cy="11.7" r="3.6"/><circle cx="4.2" cy="7.8" r="3.6"/><rect x="5" y="5" width="6" height="6"/></g></g>
<text x="516.50" y="13.75" textLength="9.4" lengthAdjust="spacingAndGlyphs" font-family="Liberation Sans" font-size="4.9" fill="#d0535a" stroke="#d0535a" stroke-width="0.12">ASM</text>
<text x="602.10" y="13.75" textLength="9.4" lengthAdjust="spacingAndGlyphs" font-family="Liberation Sans" font-size="4.9" fill="#d0535a" stroke="#d0535a" stroke-width="0.12">ASM</text>
<path d="M762.3 7.8L769 12.5L762.3 17.2Z" fill="none" stroke="#c5c5c5" stroke-width="0.95" stroke-linecap="round" stroke-linejoin="round"/>
<path d="M774.20 10.60L777.10 13.40L780.00 10.60" fill="none" stroke="#c5c5c5" stroke-width="0.85" stroke-linecap="round" stroke-linejoin="round"/>
<rect x="789.7" y="7.5" width="9.0" height="9.3" rx="1.2" fill="none" stroke="#c5c5c5" stroke-width="0.95"/>
<path d="M794.2 7.5V16.8" fill="none" stroke="#c5c5c5" stroke-width="0.95" stroke-linecap="round" stroke-linejoin="round"/>
<circle cx="808.55" cy="12.20" r="0.95" fill="#c5c5c5"/>
<circle cx="812.30" cy="12.20" r="0.95" fill="#c5c5c5"/>
<circle cx="816.05" cy="12.20" r="0.95" fill="#c5c5c5"/>
<path d="M194.15 29.92L197.45 32.80L194.15 35.68" fill="none" stroke="#a9a9a9" stroke-width="0.85" stroke-linecap="round" stroke-linejoin="round"/>
<g transform="translate(204.70 28.30) scale(0.5250)"><g fill="#519fcf" mask="url(#pym)"><circle cx="8.1" cy="4.3" r="3.6"/><circle cx="11.8" cy="8.2" r="3.6"/><circle cx="7.9" cy="11.7" r="3.6"/><circle cx="4.2" cy="7.8" r="3.6"/><rect x="5" y="5" width="6" height="6"/></g></g>
<path d="M310.55 29.92L313.85 32.80L310.55 35.68" fill="none" stroke="#a9a9a9" stroke-width="0.85" stroke-linecap="round" stroke-linejoin="round"/>
<g transform="translate(316.8 26.2) scale(0.72)"><path fill="#e5ae18" d="M11.34 9.71h.71l2.67-2.67v-.71L13.38 5h-.7l-1.82 1.81h-5V5.56l1.86-1.86V3l-2-2H5L1 5v.71l2 2h.71l1.14-1.15v5.79l.5.5H10v.52l1.33 1.34h.71l2.67-2.67v-.71L13.37 10h-.7l-1.86 1.85h-5v-4H10v.48l1.34 1.38zm1.69-3.65l.63.63-2 2-.63-.63 2-2zm0 5l.63.63-2 2-.63-.63 2-2zM3.35 6.65l-1.29-1.3 3.29-3.29 1.3 1.29-3.3 3.3z"/></g>
<path d="M406.15 29.92L409.45 32.80L406.15 35.68" fill="none" stroke="#a9a9a9" stroke-width="0.85" stroke-linecap="round" stroke-linejoin="round"/>
<g transform="translate(414.6 26.2) scale(0.68)"><path fill="#b180d7" d="M13.51 4l-5-3h-1l-5 3-.49.86v6l.49.85 5 3h1l5-3 .49-.85v-6L13.51 4zm-6 9.56l-4.5-2.7V5.7l4.5 2.45v5.41zM3.27 4.7l4.74-2.84 4.74 2.84-4.74 2.59L3.27 4.7zm9.74 6.16l-4.5 2.7V8.15l4.5-2.45v5.16z"/></g>
<circle cx="113.65" cy="12.20" r="0.95" fill="#c5c5c5"/>
<circle cx="117.40" cy="12.20" r="0.95" fill="#c5c5c5"/>
<circle cx="121.15" cy="12.20" r="0.95" fill="#c5c5c5"/>
<path d="M5.15 30.75L8.60 34.45L12.05 30.75" fill="none" stroke="#c5c5c5" stroke-width="0.80" stroke-linecap="round" stroke-linejoin="round"/>
<path d="M21.35 45.60L27.15 51.40M27.15 45.60L21.35 51.40" fill="none" stroke="#c5c5c5" stroke-width="0.90" stroke-linecap="round" stroke-linejoin="round"/>
<g transform="translate(34.40 43.90) scale(0.5250)"><g fill="#519fcf" mask="url(#pym)"><circle cx="8.1" cy="4.3" r="3.6"/><circle cx="11.8" cy="8.2" r="3.6"/><circle cx="7.9" cy="11.7" r="3.6"/><circle cx="4.2" cy="7.8" r="3.6"/><rect x="5" y="5" width="6" height="6"/></g></g>
<g transform="translate(34.40 59.70) scale(0.5250)"><g fill="#519fcf" mask="url(#pym)"><circle cx="8.1" cy="4.3" r="3.6"/><circle cx="11.8" cy="8.2" r="3.6"/><circle cx="7.9" cy="11.7" r="3.6"/><circle cx="4.2" cy="7.8" r="3.6"/><rect x="5" y="5" width="6" height="6"/></g></g>
<g transform="translate(34.40 75.50) scale(0.5250)"><g fill="#519fcf" mask="url(#pym)"><circle cx="8.1" cy="4.3" r="3.6"/><circle cx="11.8" cy="8.2" r="3.6"/><circle cx="7.9" cy="11.7" r="3.6"/><circle cx="4.2" cy="7.8" r="3.6"/><rect x="5" y="5" width="6" height="6"/></g></g>
<text x="33.90" y="97.25" textLength="9.4" lengthAdjust="spacingAndGlyphs" font-family="Liberation Sans" font-size="4.9" fill="#d0535a" stroke="#d0535a" stroke-width="0.12">ASM</text>
<text x="33.90" y="113.05" textLength="9.4" lengthAdjust="spacingAndGlyphs" font-family="Liberation Sans" font-size="4.9" fill="#d0535a" stroke="#d0535a" stroke-width="0.12">ASM</text>
<path d="M5.15 125.75L8.60 129.45L12.05 125.75" fill="none" stroke="#c5c5c5" stroke-width="0.80" stroke-linecap="round" stroke-linejoin="round"/>
<path d="M16.19 139.99L20.01 143.30L16.19 146.61" fill="none" stroke="#c5c5c5" stroke-width="0.80" stroke-linecap="round" stroke-linejoin="round"/>
<path d="M14.65 157.25L18.10 160.95L21.55 157.25" fill="none" stroke="#c5c5c5" stroke-width="0.80" stroke-linecap="round" stroke-linejoin="round"/>
<path d="M22.09 171.59L25.91 174.90L22.09 178.21" fill="none" stroke="#c5c5c5" stroke-width="0.80" stroke-linecap="round" stroke-linejoin="round"/>
<g transform="translate(18.80 186.10) scale(0.5250)"><g fill="#519fcf" mask="url(#pym)"><circle cx="8.1" cy="4.3" r="3.6"/><circle cx="11.8" cy="8.2" r="3.6"/><circle cx="7.9" cy="11.7" r="3.6"/><circle cx="4.2" cy="7.8" r="3.6"/><rect x="5" y="5" width="6" height="6"/></g></g>
<g transform="translate(18.80 201.90) scale(0.5250)"><g fill="#519fcf" mask="url(#pym)"><circle cx="8.1" cy="4.3" r="3.6"/><circle cx="11.8" cy="8.2" r="3.6"/><circle cx="7.9" cy="11.7" r="3.6"/><circle cx="4.2" cy="7.8" r="3.6"/><rect x="5" y="5" width="6" height="6"/></g></g>
<g transform="translate(18.80 217.70) scale(0.5250)"><g fill="#519fcf" mask="url(#pym)"><circle cx="8.1" cy="4.3" r="3.6"/><circle cx="11.8" cy="8.2" r="3.6"/><circle cx="7.9" cy="11.7" r="3.6"/><circle cx="4.2" cy="7.8" r="3.6"/><rect x="5" y="5" width="6" height="6"/></g></g>
<g transform="translate(18.80 233.50) scale(0.5250)"><g fill="#519fcf" mask="url(#pym)"><circle cx="8.1" cy="4.3" r="3.6"/><circle cx="11.8" cy="8.2" r="3.6"/><circle cx="7.9" cy="11.7" r="3.6"/><circle cx="4.2" cy="7.8" r="3.6"/><rect x="5" y="5" width="6" height="6"/></g></g>
<g transform="translate(18.80 249.30) scale(0.5250)"><g fill="#519fcf" mask="url(#pym)"><circle cx="8.1" cy="4.3" r="3.6"/><circle cx="11.8" cy="8.2" r="3.6"/><circle cx="7.9" cy="11.7" r="3.6"/><circle cx="4.2" cy="7.8" r="3.6"/><rect x="5" y="5" width="6" height="6"/></g></g>
<path d="M14.65 267.85L18.10 271.55L21.55 267.85" fill="none" stroke="#c5c5c5" stroke-width="0.80" stroke-linecap="round" stroke-linejoin="round"/>
<text x="18.20" y="286.85" textLength="9.4" lengthAdjust="spacingAndGlyphs" font-family="Liberation Sans" font-size="4.9" fill="#d0535a" stroke="#d0535a" stroke-width="0.12">ASM</text>
<text x="18.20" y="302.65" textLength="9.4" lengthAdjust="spacingAndGlyphs" font-family="Liberation Sans" font-size="4.9" fill="#d0535a" stroke="#d0535a" stroke-width="0.12">ASM</text>
<path d="M14.65 315.25L18.10 318.95L21.55 315.25" fill="none" stroke="#c5c5c5" stroke-width="0.80" stroke-linecap="round" stroke-linejoin="round"/>
<text x="18.20" y="334.25" textLength="9.4" lengthAdjust="spacingAndGlyphs" font-family="Liberation Sans" font-size="4.9" fill="#d0535a" stroke="#d0535a" stroke-width="0.12">ASM</text>
<text x="18.20" y="350.05" textLength="9.4" lengthAdjust="spacingAndGlyphs" font-family="Liberation Sans" font-size="4.9" fill="#d0535a" stroke="#d0535a" stroke-width="0.12">ASM</text>
<path d="M14.65 362.65L18.10 366.35L21.55 362.65" fill="none" stroke="#c5c5c5" stroke-width="0.80" stroke-linecap="round" stroke-linejoin="round"/>
<text x="18.20" y="381.65" textLength="9.4" lengthAdjust="spacingAndGlyphs" font-family="Liberation Sans" font-size="4.9" fill="#d0535a" stroke="#d0535a" stroke-width="0.12">ASM</text>
<text x="18.20" y="397.45" textLength="9.4" lengthAdjust="spacingAndGlyphs" font-family="Liberation Sans" font-size="4.9" fill="#d0535a" stroke="#d0535a" stroke-width="0.12">ASM</text>
<path d="M7.09 460.29L10.91 463.60L7.09 466.91" fill="none" stroke="#c5c5c5" stroke-width="0.80" stroke-linecap="round" stroke-linejoin="round"/></svg>
</div></body></html>
